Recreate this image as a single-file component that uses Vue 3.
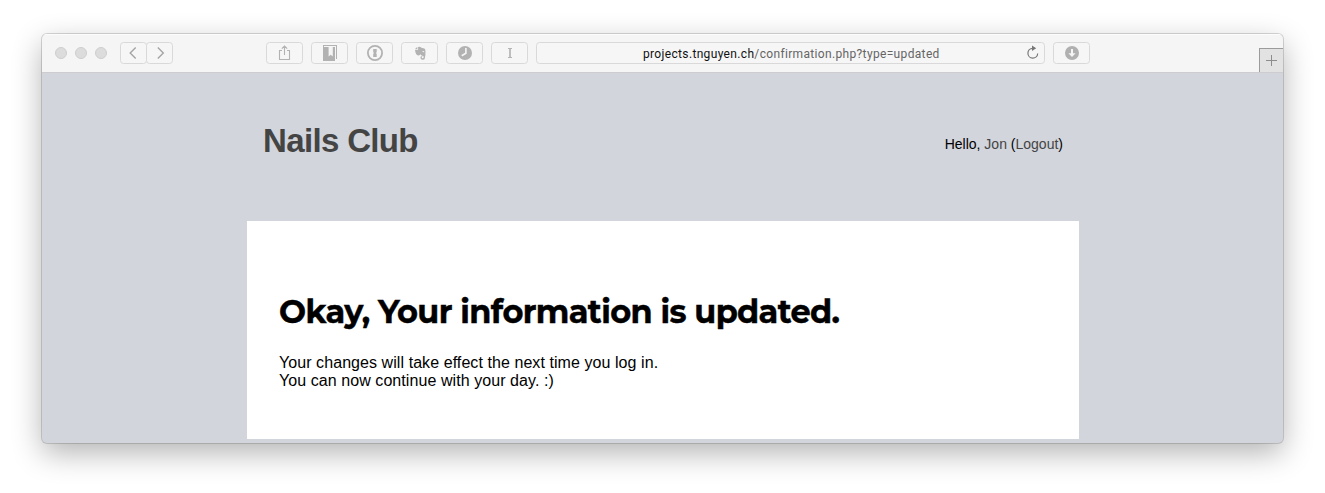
<script setup>
const title = 'Nails Club'
const user = 'Jon'
</script>

<template>
  <div class="stage">
    <div class="window">
      <header class="toolbar">
        <div class="lights"><i></i><i></i><i></i></div>
        <div class="nav">
          <button class="btn"><svg width="25" height="20" viewBox="0 0 25 20"><path d="M14.7 4.5 9.2 10l5.5 5.5" fill="none" stroke="#a5a5a5" stroke-width="1.4" /></svg></button>
          <button class="btn"><svg width="25" height="20" viewBox="0 0 25 20"><path d="M10.8 4.5 16.3 10l-5.5 5.5" fill="none" stroke="#a5a5a5" stroke-width="1.4" /></svg></button>
        </div>
        <div class="tools">
          <button class="btn">
            <svg width="35" height="20" viewBox="0 0 35 20"><path d="M15 7.5h-2.5v9h10v-9H20M17.5 12V3M14.8 5.7l2.7-2.7 2.7 2.7" fill="none" stroke="#b2b2b2" stroke-width="1.1" /></svg>
          </button>
          <button class="btn">
            <svg width="35" height="20" viewBox="0 0 35 20"><path d="M11 2h14v14h-1V3H12v1h11v14H11z" fill="#b2b2b2" /><path d="M16.6 4h4.2v9.5l-2.1-1.8-2.1 1.8z" fill="#f5f5f5" /></svg>
          </button>
          <button class="btn">
            <svg width="35" height="20" viewBox="0 0 35 20"><circle cx="18" cy="10" r="7.1" fill="none" stroke="#b2b2b2" stroke-width="1.8" /><path d="M16.2 6h3.5v3l-.7 1 .7 1v3h-3.5v-3l.7-1-.7-1z" fill="#b2b2b2" /></svg>
          </button>
          <button class="btn">
            <svg width="35" height="20" viewBox="0 0 35 20"><path d="M13 7.1h2.3q.8 0 .8-.8V4q2.2-.6 3.3.8l3 .6q1 .3 1.1 3 .1 4-.7 7-.3 1.4-2 1.4-2.4 0-2.4-2 0-1.7 1.7-1.7.4 0 .5.4-.9.2-.9 1 0 .7.9.7 1.1 0 1.1-1.2 0-1.3-1.5-1.3-1.2 0-1.6-1.4-.5 1.2-2.3 1.1-2.8-.1-3.3-5.3z" fill="#b2b2b2" /><path d="M12.9 6.2 15.3 3.8v2.4z" fill="#b2b2b2" /><path d="M20.3 9q.2-1.2 1.2-1t.8 1.3z" fill="#f5f5f5" /></svg>
          </button>
          <button class="btn">
            <svg width="35" height="20" viewBox="0 0 35 20"><circle cx="18" cy="10" r="7" fill="#b2b2b2" /><path d="M18.9 5v5.2l-4.2 2.5" fill="none" stroke="#f5f5f5" stroke-width="1.6" /></svg>
          </button>
          <button class="btn">
            <svg width="35" height="20" viewBox="0 0 35 20"><path d="M16 5.5h4M16 14.5h4" stroke="#b4b4b4" stroke-width="1" /><path d="M18 5v10" stroke="#b4b4b4" stroke-width="1.7" /></svg>
          </button>
        </div>
        <div class="address">
          <span class="url"><b>projects.tnguyen.ch</b>/confirmation.php?type=updated</span>
          <svg class="reload" width="16" height="18" viewBox="0 0 16 18"><path d="M7.7 4.3A4.9 4.9 0 1 0 12.7 9.5" fill="none" stroke="#777" stroke-width="1.2" /><path d="M7 1.5 11.2 4.2 7 6.9z" fill="#777" /></svg>
        </div>
        <button class="btn download">
          <svg width="35" height="20" viewBox="0 0 35 20"><circle cx="18" cy="10" r="7" fill="#b0b0b0" /><path d="M17 6h2v4.3h2.6L18 14l-3.6-3.7H17z" fill="#f5f5f5" /></svg>
        </button>
        <button class="newtab"><svg width="23" height="23" viewBox="0 0 23 23"><path d="M6 11.5h11M11.5 6v11" stroke="#8c8c8c" stroke-width="1" /></svg></button>
      </header>

      <main class="page">
        <div class="container">
          <div class="banner">
            <h1>{{ title }}</h1>
            <p class="hello">Hello, <a>{{ user }}</a> (<a>Logout</a>)</p>
          </div>
          <section class="card">
            <h2>Okay, Your information is updated.</h2>
            <p>Your changes will take effect the next time you log in.<br />You can now continue with your day. :)</p>
          </section>
        </div>
      </main>
    </div>
  </div>
</template>

<style>
body { background: #fff; overflow: hidden; }
</style>

<style scoped>
* { box-sizing: border-box; }
.stage {
  width: 1325px;
  height: 493px;
  padding: 34px 42px 50px;
  overflow: hidden;
  font-family: "Liberation Sans", Arial, sans-serif;
}
.window {
  width: 1241px;
  height: 409px;
  border-radius: 5px;
  background: #d2d5dc;
  box-shadow: 0 0 0 1px rgba(0, 0, 0, .15), 0 10px 30px rgba(0, 0, 0, .3);
  overflow: hidden;
}
.toolbar {
  height: 39px;
  display: flex;
  align-items: flex-start;
  padding: 8px 0 0 13px;
  background: #f5f5f5;
  border-bottom: 1px solid #cdcdd0;
  box-shadow: inset 0 1px #fcfcfc;
}
.lights { display: flex; gap: 8px; padding-top: 5px; }
.lights i {
  width: 12px;
  height: 12px;
  border-radius: 50%;
  background: #dcdcdc;
  border: 1px solid #cecece;
}
.btn {
  display: block;
  padding: 0;
  height: 22px;
  background: #f6f6f6;
  border: 1px solid #d9d9d9;
  border-radius: 3.5px;
}
.btn svg, .newtab svg { display: block; }
.nav { display: flex; margin-left: 13px; }
.nav .btn + .btn { margin-left: -1px; }
.tools { display: flex; gap: 8px; margin-left: 93px; }
.address {
  position: relative;
  width: 509px;
  height: 22px;
  margin: 0 8px;
  padding-left: 106px;
  border: 1px solid #d9d9d9;
  border-radius: 3.5px;
  background: #f6f6f6;
}
.url {
  display: block;
  white-space: nowrap;
  font: 12px/22px Roboto, "Liberation Sans", sans-serif;
  letter-spacing: .34px;
  color: #656565;
}
.url b { font-weight: 400; color: #111; }
.reload { position: absolute; right: 3px; top: 1px; }
.newtab {
  width: 24px;
  height: 24px;
  margin: 6px 0 0 auto;
  padding: 0;
  background: #e2e2e2;
  border: solid #9b9b9b;
  border-width: 1px 0 0 1px;
}
.container { width: 832px; margin: 0 auto 0 205px; }
.banner {
  height: 148px;
  padding: 0 16px;
  display: flex;
  justify-content: space-between;
}
h1 {
  margin: 49px 0 0;
  font-size: 33px;
  line-height: 38px;
  letter-spacing: -.65px;
  color: #444;
}
.hello {
  margin: 63px 0 0;
  font-size: 14px;
  line-height: 16px;
  color: #000;
}
.hello a { color: #444; }
.card { height: 218px; padding: 71px 32px 0; background: #fff; color: #000; }
h2 {
  margin: 0;
  font: 700 32px/40px Montserrat, Inter, sans-serif;
  letter-spacing: -.62px;
  -webkit-text-stroke: .4px #000;
  white-space: nowrap;
}
.card p { margin: 22px 0 0; font-size: 16px; line-height: 18px; letter-spacing: .07px; }
</style>
